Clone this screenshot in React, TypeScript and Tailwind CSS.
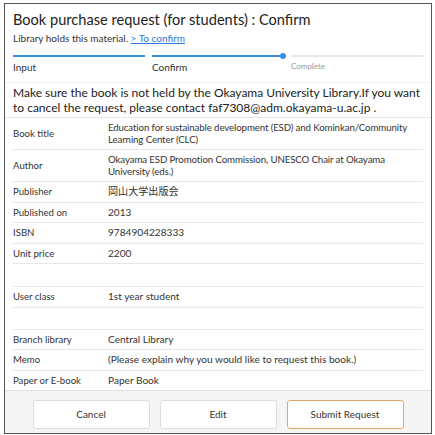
import React from "react";

interface Row {
  label: string;
  value: string;
  tight?: boolean;
}

const rows: Row[] = [
  {
    label: "Book title",
    value: "Education for sustainable development (ESD) and Kominkan/Community Learning Center (CLC)",
    tight: true,
  },
  {
    label: "Author",
    value: "Okayama ESD Promotion Commission, UNESCO Chair at Okayama University (eds.)",
    tight: true,
  },
  { label: "Publisher", value: "岡山大学出版会" },
  { label: "Published on", value: "2013" },
  { label: "ISBN", value: "9784904228333" },
  { label: "Unit price", value: "2200" },
];

const rows2: Row[] = [
  { label: "Branch library", value: "Central Library" },
  { label: "Memo", value: "(Please explain why you would like to request this book.)" },
];

function DataRow({ label, value, tight, last }: Row & { last?: boolean }) {
  return (
    <div
      className={
        last
          ? "flex items-center py-[4px] text-[10px] leading-[11.5px] text-[#333]"
          : "flex items-center py-[4px] text-[10px] leading-[11.5px] text-[#333] border-b border-[#e6e6e6]"
      }
    >
      <div className="w-[95px] shrink-0 text-[9.6px]">{label}</div>
      <div className={tight ? "flex-1 text-[9.7px] tracking-[-0.12px]" : "flex-1 text-[10.1px]"}>{value}</div>
    </div>
  );
}

export default function App() {
  return (
    <div
      className="w-[435px] h-[435px] bg-white pt-[3px] pl-[4px]"
      style={{ fontFamily: "Lato, 'Noto Sans CJK JP', sans-serif" }}
    >
      <div className="w-[428px] h-[431px] border border-[#555] flex flex-col overflow-hidden">
        <div className="px-[8px] pt-[6px]">
          <h1 className="text-[14.6px] leading-[20px] text-[#222]">
            Book purchase request (for students) : Confirm
          </h1>
          <p className="text-[10px] leading-[12px] mt-[2px] text-[#333]">
            Library holds this material.{" "}
            <a className="text-[#2a7ad6] underline">&gt; To confirm</a>
          </p>
          <div className="mt-[11px] grid grid-cols-3 gap-[7px]">
            <div>
              <div className="h-[2px] bg-[#3b8ee0]" />
              <div className="text-[10px] leading-[12px] mt-[4px] text-[#333]">Input</div>
            </div>
            <div>
              <div className="relative h-[2px] bg-[#3b8ee0]">
                <span className="absolute right-[-2px] top-[-2px] w-[6px] h-[6px] rounded-full bg-[#3b8ee0]" />
              </div>
              <div className="text-[10px] leading-[12px] mt-[4px] text-[#333]">Confirm</div>
            </div>
            <div>
              <div className="h-[2px] bg-[#e8e8e8]" />
              <div className="text-[8px] leading-[12px] mt-[3px] text-[#999]">Complete</div>
            </div>
          </div>
        </div>
        <div className="mt-[9px] border-t border-[#f0f0f0] px-[8px] pt-[2px] pb-[2px] text-[12px] leading-[15px] text-[#222]">
          Make sure the book is not held by the Okayama University Library.If you want to cancel the request, please contact faf7308@adm.okayama-u.ac.jp .
        </div>
        <div className="border-t border-[#e6e6e6] px-[8px] bg-white rounded-b-[4px]">
          {rows.map((r) => (
            <DataRow key={r.label} {...r} />
          ))}
          <div className="h-[23px] border-b border-[#e6e6e6]" />
          <DataRow label="User class" value="1st year student" />
          <div className="h-[22px] border-b border-[#e6e6e6]" />
          {rows2.map((r) => (
            <DataRow key={r.label} {...r} />
          ))}
          <DataRow label="Paper or E-book" value="Paper Book" last />
        </div>
        <div className="flex-1 bg-[#f5f5f5] border-t border-[#e0e0e0] flex justify-center gap-[10px] pt-[9px]">
          <button className="w-[117px] h-[29px] bg-white border border-[#ddd] rounded-[3px] text-[10px] text-[#333]">
            Cancel
          </button>
          <button className="w-[117px] h-[29px] bg-white border border-[#ddd] rounded-[3px] text-[10px] text-[#333]">
            Edit
          </button>
          <button className="w-[117px] h-[29px] bg-white border border-[#e0a76a] rounded-[3px] text-[10px] text-[#333]">
            Submit Request
          </button>
        </div>
      </div>
    </div>
  );
}
